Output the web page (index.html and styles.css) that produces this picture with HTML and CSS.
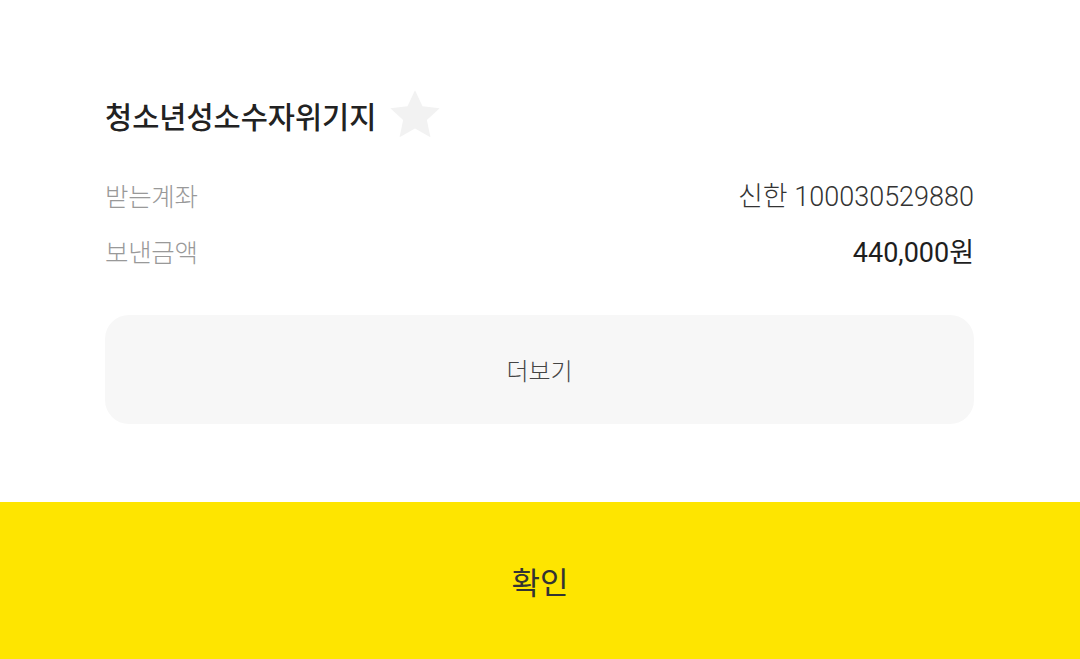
FILE: index.html
```html
<!DOCTYPE html>
<html lang="ko">
<head>
<meta charset="utf-8">
<link rel="stylesheet" href="styles.css">
</head>
<body>
<div class="page">
  <div class="content">
    <div class="title-row">
      <h1 class="title">청소년성소수자위기지</h1>
      <svg class="star" viewBox="0 0 24 24" width="58" height="58"><path d="M12 1.8l3.1 6.6 7.1.8-5.3 4.9 1.5 7.1L12 17.6l-6.4 3.6 1.5-7.1L1.8 9.2l7.1-.8z" fill="#f2f2f2"/></svg>
    </div>
    <div class="row first">
      <span class="label">받는계좌</span>
      <span class="value">신한 100030529880</span>
    </div>
    <div class="row">
      <span class="label">보낸금액</span>
      <span class="value strong">440,000원</span>
    </div>
    <div class="more">더보기</div>
  </div>
  <div class="confirm">확인</div>
</div>
</body>
</html>
```

FILE: styles.css
```css
html, body {
  margin: 0;
  padding: 0;
  background: #fff;
}
body {
  font-family: "Noto Sans CJK KR", "Noto Sans", sans-serif;
  width: 1080px;
  height: 659px;
  overflow: hidden;
}
.page {
  display: flex;
  flex-direction: column;
  height: 659px;
}
.content {
  padding: 88px 106px 0 105px;
  height: 412px;
  box-sizing: border-box;
}
.title-row {
  display: flex;
  align-items: center;
  gap: 10px;
  height: 54px;
}
.title {
  margin: 0;
  font-size: 29.5px;
  font-weight: 500;
  color: #222;
  letter-spacing: 0;
}
.star {
  display: block;
  flex: none;
}
.row {
  display: flex;
  justify-content: space-between;
  align-items: center;
  height: 56px;
}
.row.first {
  margin-top: 24px;
}
.label {
  font-size: 25.5px;
  font-weight: 300;
  color: #999;
  letter-spacing: -0.3px;
}
.value {
  font-family: Roboto, "Noto Sans CJK KR", sans-serif;
  font-size: 27px;
  font-weight: 300;
  color: #333;
}
.value.strong {
  font-weight: 400;
  color: #1e1e1e;
}
.more {
  margin-top: 37px;
  height: 109px;
  border-radius: 24px;
  background: #f7f7f7;
  display: flex;
  align-items: center;
  justify-content: center;
  font-size: 24px;
  font-weight: 300;
  color: #444;
}
.confirm {
  margin-top: 90px;
  flex: 1;
  background: #fee500;
  display: flex;
  align-items: center;
  justify-content: center;
  font-size: 31px;
  font-weight: 400;
  color: #333;
}
```
